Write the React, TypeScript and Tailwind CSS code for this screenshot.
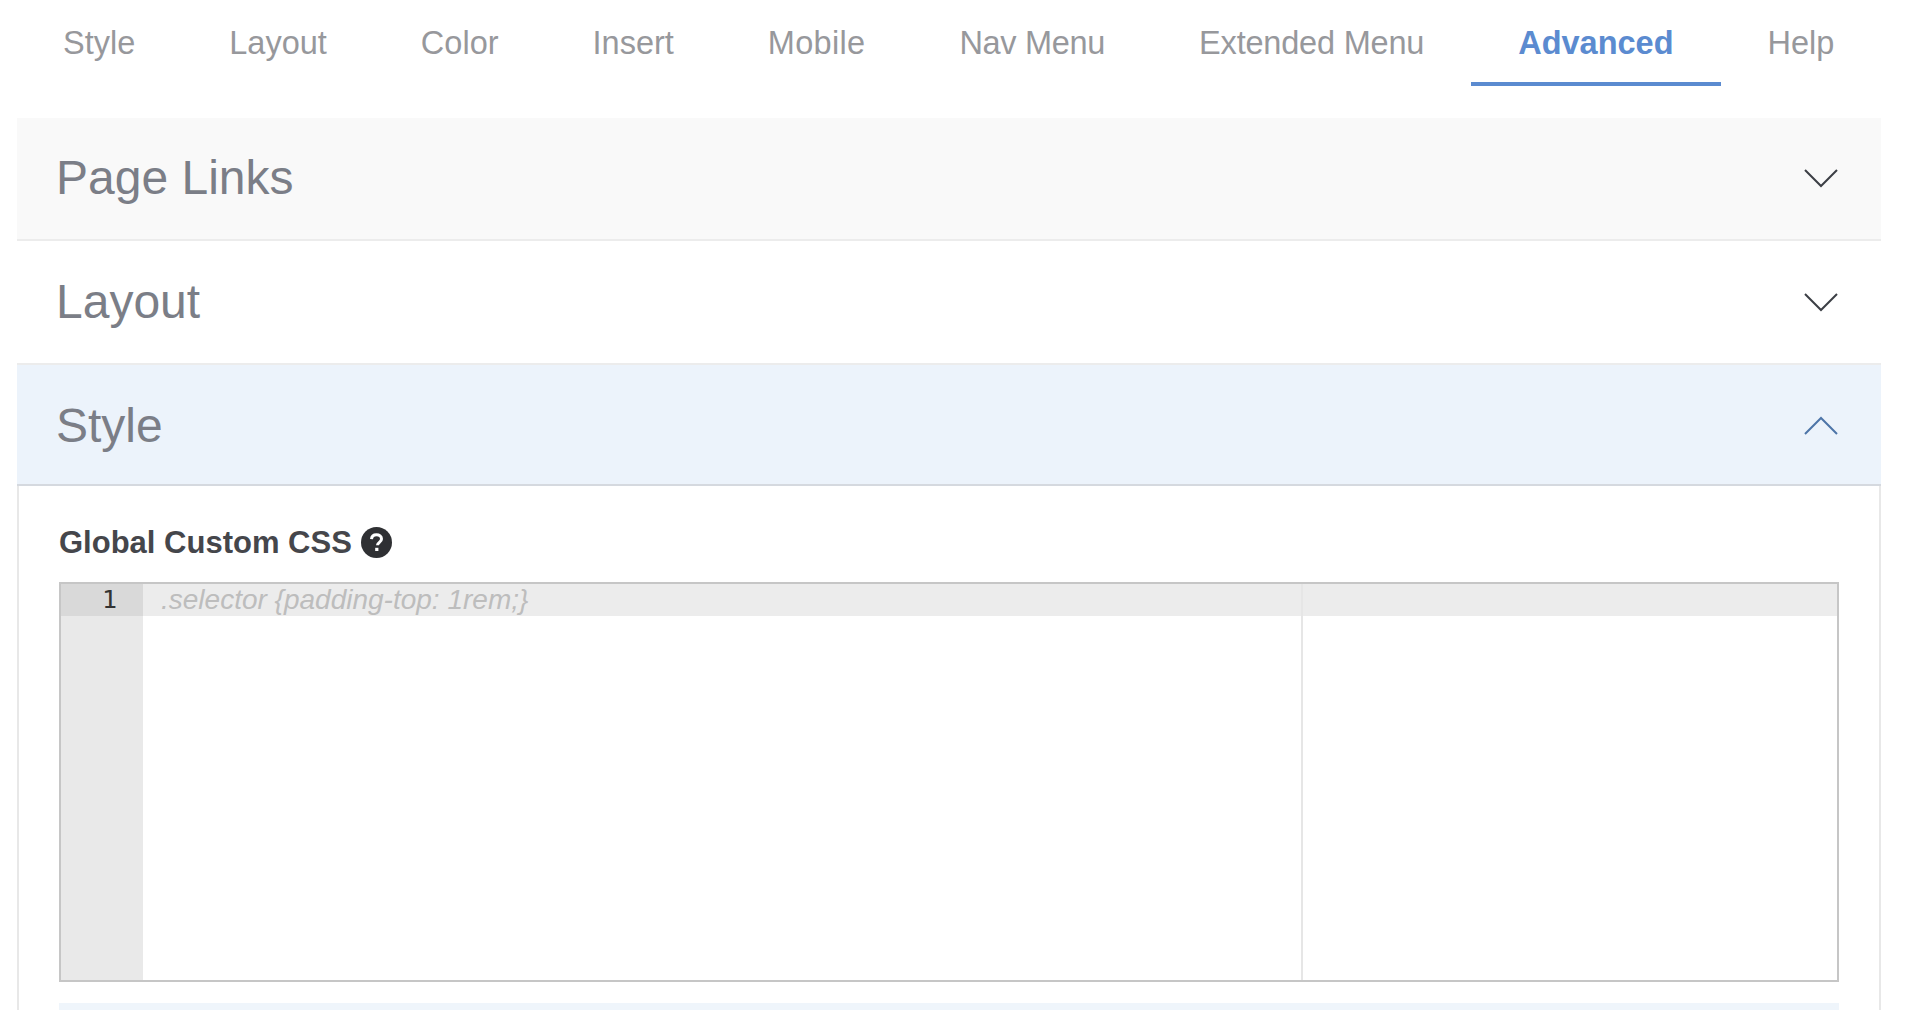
import React from "react";

const tabs = [
  { t: "Style", c: "" },
  { t: "Layout", c: "" },
  { t: "Color", c: "" },
  { t: "Insert", c: "" },
  { t: "Mobile", c: "tracking-[0.3px]" },
  { t: "Nav Menu", c: "tracking-[-0.3px]" },
  { t: "Extended Menu", c: "tracking-[-0.2px]" },
  { t: "Advanced", c: "" },
  { t: "Help", c: "" },
];

function Chevron({ up, color }: { up?: boolean; color: string }) {
  return (
    <svg width="36" height="24" viewBox="0 0 36 24" fill="none" stroke={color} strokeWidth="2">
      <path d={up ? "M2 20 L18 4 L34 20" : "M2 4 L18 20 L34 4"} />
    </svg>
  );
}

function Header({ title, cls, up, color }: { title: string; cls: string; up?: boolean; color: string }) {
  return (
    <div className={`flex items-center justify-between pl-[39px] pr-[42px] border-b-2 ${cls}`}>
      <span className="text-[48px] leading-none text-[#7b7e87]">{title}</span>
      <Chevron up={up} color={color} />
    </div>
  );
}

export default function App() {
  return (
    <div className="h-[1010px] w-[1906px] overflow-hidden bg-white font-['Liberation_Sans',sans-serif]">
      <div className="flex h-[86px] pl-[16px]">
        {tabs.map(({ t, c }) =>
          t === "Advanced" ? (
            <div
              key={t}
              className="flex h-[86px] items-center border-b-4 border-[#5b8bd0] px-[47px] pt-[4px] text-[32.5px] font-bold text-[#5b8bd0]"
            >
              {t}
            </div>
          ) : (
            <div key={t} className={`flex h-[86px] items-center px-[47px] text-[32.5px] text-[#97989c] ${c}`}>
              {t}
            </div>
          )
        )}
      </div>
      <div className="mx-[17px] mt-[32px] w-[1864px]">
        <Header title="Page Links" cls="h-[123px] pb-[1px] bg-[#f9f9f9] border-[#ececec]" color="#3c3f45" />
        <Header title="Layout" cls="h-[124px] bg-white border-[#ececec]" color="#3c3f45" />
        <Header title="Style" cls="h-[121px] pt-[2px] bg-[#ecf3fb] border-[#d5d9df]" up color="#4d75a8" />
        <div className="border-x-2 border-[#e8e8e8] px-[40px] pt-[29px]">
          <div className="flex h-[56px] items-center gap-[9px] pb-[2px]">
            <span className="text-[31px] font-bold leading-none text-[#45464b]">Global Custom CSS</span>
            <svg width="31" height="31" viewBox="0 0 31 31">
              <circle cx="15.5" cy="15.5" r="15.5" fill="#2f3033" />
              <path d="M10.5 12.2c.2-2.8 2.2-4.4 5-4.4 2.9 0 5 1.6 5 4.1 0 3.5-4 3.4-4 6.4" fill="none" stroke="#fff" strokeWidth="3" />
              <rect x="14.2" y="20.8" width="3.2" height="3.2" fill="#fff" />
            </svg>
          </div>
          <div className="mt-[11px] flex h-[400px] border-2 border-[#c6c6c6] bg-white">
            <div className="w-[82px] bg-[#e9e9e9]">
              <div className="flex h-[32px] items-center justify-end bg-[#d9d9d9] pr-[26px] font-['DejaVu_Sans_Mono',monospace] text-[25px] text-[#333]">
                1
              </div>
            </div>
            <div className="relative flex-1">
              <div className="flex h-[32px] items-center bg-[#ececec] pl-[18px] text-[28px] italic text-[#bdbdbd]">
                .selector {"{"}padding-top: 1rem;{"}"}
              </div>
              <div className="absolute inset-y-0 left-[1158px] w-[2px] bg-[#e6e6e6]" />
            </div>
          </div>
          <div className="mt-[21px] h-[20px] bg-[#eff5fb]" />
        </div>
      </div>
    </div>
  );
}
